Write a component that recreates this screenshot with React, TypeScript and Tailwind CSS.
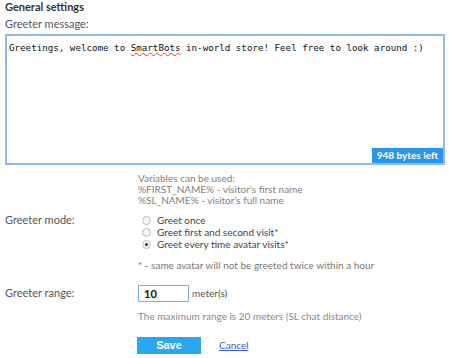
import { useState } from 'react';

const font = { fontFamily: 'Lato, "Liberation Sans", sans-serif' };

export default function App() {
  const [mode, setMode] = useState('every');
  const [range, setRange] = useState('10');

  const modes = [
    { id: 'once', label: 'Greet once' },
    { id: 'first', label: 'Greet first and second visit*' },
    { id: 'every', label: 'Greet every time avatar visits*' },
  ];

  return (
    <div className="w-[449px] h-[358px] bg-white text-[#444] text-[11px] overflow-hidden" style={font}>
      <div className="px-[5px]">
        <h2 className="font-bold text-[#333] leading-[14px]">General settings</h2>
        <p className="mt-[3px] leading-[14px] text-[#555]">Greeter message:</p>

        {/* Message box */}
        <div className="relative mt-[3px] h-[131px] w-[440px] border-2 border-[#8cbcf2]">
          <p
            className="pl-[2px] pt-[5px] text-[9.2px] text-[#111]"
            style={{ fontFamily: '"DejaVu Sans Mono", "Liberation Mono", monospace' }}
          >
            Greetings, welcome to{' '}
            <span className="underline decoration-wavy decoration-red-500">SmartBots</span> in-world store! Feel free
            to look around :)
          </p>
          <span className="absolute right-0 bottom-0 bg-[#2b95ea] px-[5px] h-[15px] leading-[15px] text-white font-bold text-[10px]">
            948 bytes left
          </span>
        </div>
      </div>

      {/* Variables hint */}
      <div className="ml-[138px] mt-[8px] text-[#808080] text-[10px] leading-[11px]">
        <p>Variables can be used:</p>
        <p>%FIRST_NAME% - visitor's first name</p>
        <p>%SL_NAME% - visitor's full name</p>
      </div>

      {/* Greeter mode */}
      <div className="flex mt-[8px]">
        <div className="w-[138px] pl-[5px] text-[#555] leading-[12px]">Greeter mode:</div>
        <div className="flex flex-col">
          {modes.map((m) => (
            <label key={m.id} className="flex items-center h-[12px] gap-[6px] text-[10px] text-[#444] cursor-pointer">
              <span
                onClick={() => setMode(m.id)}
                className="w-[9px] h-[9px] ml-[4px] rounded-full border border-[#bbb] bg-[#f4f4f4] flex items-center justify-center"
              >
                {mode === m.id && <span className="w-[3px] h-[3px] rounded-full bg-[#333]" />}
              </span>
              {m.label}
            </label>
          ))}
          <p className="mt-[9px] text-[10px] text-[#777] leading-[12px]">
            * - same avatar will not be greeted twice within a hour
          </p>
        </div>
      </div>

      {/* Greeter range */}
      <div className="flex mt-[14px]">
        <div className="w-[138px] pl-[5px] text-[#555] pt-[2px] leading-[12px]">Greeter range:</div>
        <div className="flex flex-col">
          <div className="flex items-center gap-[3px]">
            <input
              value={range}
              onChange={(e) => setRange(e.target.value)}
              className="w-[51px] h-[17px] border border-[#7fb0ea] px-[5px] text-[11px] font-bold text-[#111] outline-none"
              style={font}
            />
            <span className="text-[10px] text-[#555]">meter(s)</span>
          </div>
          <p className="mt-[8px] text-[10px] text-[#888] leading-[12px]">
            The maximum range is 20 meters (SL chat distance)
          </p>
        </div>
      </div>

      {/* Actions */}
      <div className="flex items-center ml-[137px] mt-[15px] gap-[18px]">
        <button
          className="w-[64px] h-[17px] bg-[#2aa6f2] text-white font-bold text-[11px] leading-[17px]"
          style={{ fontFamily: '"Liberation Sans", Arial, sans-serif' }}
        >
          Save
        </button>
        <a href="#" className="text-[#3a5ccd] underline text-[10px]">
          Cancel
        </a>
      </div>
    </div>
  );
}
